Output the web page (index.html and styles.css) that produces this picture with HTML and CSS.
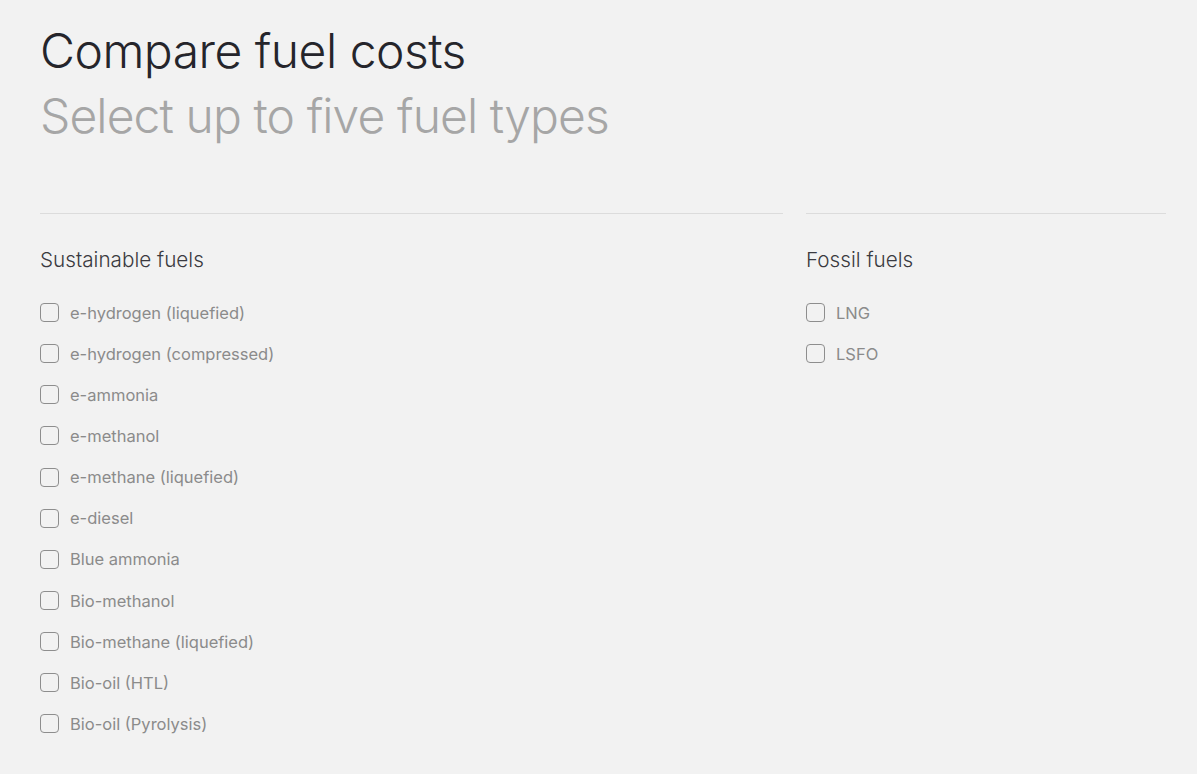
FILE: index.html
```html
<!DOCTYPE html>
<html lang="en">
<head>
<meta charset="utf-8">
<title>Compare fuel costs</title>
<link rel="stylesheet" href="styles.css">
</head>
<body>
<main class="page">
  <header class="intro">
    <h1 class="title">Compare fuel costs</h1>
    <p class="subtitle">Select up to five fuel types</p>
  </header>
  <div class="groups">
    <section class="group group-main">
      <h2 class="group-title">Sustainable fuels</h2>
      <ul class="options">
        <li><label class="option"><input type="checkbox"><span class="box"></span><span>e-hydrogen (liquefied)</span></label></li>
        <li><label class="option"><input type="checkbox"><span class="box"></span><span>e-hydrogen (compressed)</span></label></li>
        <li><label class="option"><input type="checkbox"><span class="box"></span><span>e-ammonia</span></label></li>
        <li><label class="option"><input type="checkbox"><span class="box"></span><span>e-methanol</span></label></li>
        <li><label class="option"><input type="checkbox"><span class="box"></span><span>e-methane (liquefied)</span></label></li>
        <li><label class="option"><input type="checkbox"><span class="box"></span><span>e-diesel</span></label></li>
        <li><label class="option"><input type="checkbox"><span class="box"></span><span>Blue ammonia</span></label></li>
        <li><label class="option"><input type="checkbox"><span class="box"></span><span>Bio-methanol</span></label></li>
        <li><label class="option"><input type="checkbox"><span class="box"></span><span>Bio-methane (liquefied)</span></label></li>
        <li><label class="option"><input type="checkbox"><span class="box"></span><span>Bio-oil (HTL)</span></label></li>
        <li><label class="option"><input type="checkbox"><span class="box"></span><span>Bio-oil (Pyrolysis)</span></label></li>
      </ul>
    </section>
    <section class="group group-side">
      <h2 class="group-title">Fossil fuels</h2>
      <ul class="options">
        <li><label class="option"><input type="checkbox"><span class="box"></span><span>LNG</span></label></li>
        <li><label class="option"><input type="checkbox"><span class="box"></span><span>LSFO</span></label></li>
      </ul>
    </section>
  </div>
</main>
</body>
</html>
```

FILE: styles.css
```css
html, body {
  margin: 0;
  padding: 0;
  background: #f2f2f2;
}
body {
  font-family: Inter, "Liberation Sans", sans-serif;
  color: #2a2a30;
}
.page {
  padding: 18px 31px 0 40px;
}
.intro {
  margin-bottom: 65px;
}
.title, .subtitle {
  margin: 0;
  font-size: 48px;
  font-weight: 300;
  line-height: 65px;
}
.title {
  color: #25252b;
  letter-spacing: -0.5px;
}
.subtitle {
  color: #a6a6a6;
  letter-spacing: -0.9px;
}
.groups {
  display: flex;
  gap: 23px;
}
.group {
  border-top: 1px solid #dcdcdc;
  padding-top: 33px;
}
.group-main {
  width: 743px;
}
.group-side {
  flex: 1;
}
.group-title {
  margin: 0 0 19px;
  font-size: 20.7px;
  font-weight: 300;
  line-height: 26px;
  color: #3a3a40;
}
.options {
  list-style: none;
  margin: 0;
  padding: 0;
}
.option {
  display: flex;
  align-items: center;
  gap: 11px;
  height: 41.15px;
  font-size: 16.5px;
  color: #8b8b8b;
  cursor: pointer;
}
.option input {
  position: absolute;
  opacity: 0;
  pointer-events: none;
}
.box {
  width: 17px;
  height: 17px;
  border: 1px solid #8e8e8e;
  border-radius: 4px;
  box-sizing: content-box;
  flex: none;
}
```
